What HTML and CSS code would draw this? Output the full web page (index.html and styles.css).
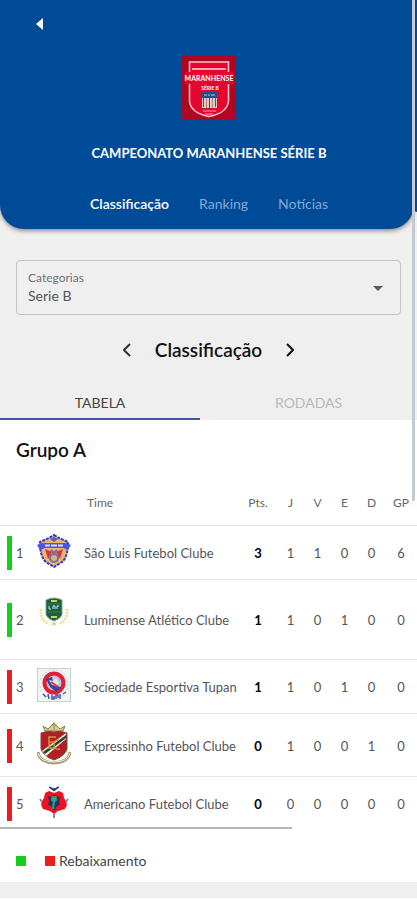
FILE: index.html
```
<!DOCTYPE html>
<html lang="pt-BR">
  <head>
    <meta charset="UTF-8" />
    <meta name="viewport" content="width=device-width, initial-scale=1.0" />
    <title>Campeonato Maranhense Série B</title>
    <link rel="stylesheet" href="styles.css">
  </head>
  <body>
    <div class="scroll-y"></div>

    <div class="hero">
      <header class="header">
        <button class="back" aria-label="Voltar">
          <svg width="8" height="12" viewBox="0 0 8 12"><path d="M7 0v12L0 6z" fill="#fff" /></svg>
        </button>
        <svg class="logo" width="54" height="63" viewBox="0 0 54 63">
          <rect width="54" height="63" fill="#b0061f" />
          <path d="M7.500 6h39v39q-1 12-19.500 15.500Q8.500 57 7.500 45z" fill="#e4062f" stroke="#f8c9cf" stroke-width="1.500" />
          <rect x="10" y="12" width="34" height="2" fill="#f5a5b0" />
          <rect x="3" y="16" width="48" height="12" fill="#e4062f" />
          <text x="27" y="25" class="logo-name">MARANHENSE</text>
          <text x="28" y="34" class="logo-serie">SÉRIE B</text>
          <rect x="20" y="36" width="15" height="16" fill="#d9cfcb" />
          <path d="M20 36h15v6H20z" fill="#284a8c" />
          <path d="M22 39h3m1 0h2m1 0h4" stroke="#b9c8e5" />
          <path d="M21.500 42v9m12 0v-9" stroke="#555b62" />
          <path d="M24.500 42v10m6-10v10" stroke="#c77a72" />
          <path d="M27.500 42v10" stroke="#3c4963" />
          <path d="M21 55h13M23 58h8" stroke="#f5a5b0" />
        </svg>
        <h1>CAMPEONATO MARANHENSE SÉRIE B</h1>
        <nav class="nav">
          <a href="#classificacao" class="active">Classificação</a>
          <a href="#ranking">Ranking</a>
          <a href="#noticias">Notícias</a>
        </nav>
      </header>
    </div>

    <div class="category">
      <label for="categoria">Categorias</label>
      <select id="categoria">
        <option>Serie B</option>
      </select>
      <svg class="arrow" width="10" height="5" viewBox="0 0 10 5"><path d="M0 0h10L5 5z" fill="#5c5c5c" /></svg>
    </div>

    <div class="phase">
      <button aria-label="Anterior">
        <svg width="8" height="14" viewBox="0 0 8 14"><path d="M7 1L1 7l6 6" fill="none" stroke="#333" stroke-width="2" /></svg>
      </button>
      <h2>Classificação</h2>
      <button aria-label="Próxima">
        <svg width="8" height="14" viewBox="0 0 8 14"><path d="M1 1l6 6-6 6" fill="none" stroke="#111" stroke-width="2" /></svg>
      </button>
    </div>

    <div class="tabs">
      <button class="tab selected">TABELA</button>
      <button class="tab">RODADAS</button>
    </div>

    <main class="content" id="classificacao">
      <h3>Grupo A</h3>
      <table>
        <colgroup>
          <col class="col-pos">
          <col class="col-crest">
          <col>
          <col class="col-pts">
          <col class="col-num">
          <col class="col-num">
          <col class="col-num">
          <col class="col-num">
          <col class="col-gp">
        </colgroup>
        <thead>
          <tr>
            <th></th>
            <th></th>
            <th class="team">Time</th>
            <th>Pts.</th>
            <th>J</th>
            <th>V</th>
            <th>E</th>
            <th>D</th>
            <th>GP</th>
          </tr>
        </thead>
        <tbody>
          <tr>
            <td><span class="pos up">1</span></td>
            <td>
              <svg class="crest" width="34" height="34" viewBox="0 0 34 34">
                <path d="M17 1l5 3 9 4q0 15-6 20l-8 5-8-5Q3 23 3 8l9-4z" fill="#efb46a" stroke="#3436c9" stroke-width="2" stroke-dasharray="3 1" />
                <path d="M8 15l7 3-4 7zM26 15l-7 3 4 7z" fill="#d2393b" />
                <path d="M0 11l5-2h24l5 2-3 5-5-2H8l-5 2z" fill="#4b55e0" />
                <path d="M8 11.500h5m1 0h6m1 0h5" stroke="#d8dcff" stroke-width="2" />
                <path d="M13 5l4-2 4 2-4 3z" fill="#5b62a5" />
                <circle cx="17" cy="24" r="4" fill="#e2b36c" stroke="#6672b4" stroke-width="2" />
                <path d="M14 16l3 3 3-3" fill="none" stroke="#7a5fb5" stroke-width="2" />
              </svg>
            </td>
            <td class="team">São Luis Futebol Clube</td>
            <td class="pts">3</td>
            <td>1</td>
            <td>1</td>
            <td>0</td>
            <td>0</td>
            <td>6</td>
          </tr>
          <tr class="tall">
            <td><span class="pos up">2</span></td>
            <td>
              <svg class="crest" width="34" height="34" viewBox="0 0 34 34">
                <path d="M4 13q-1 11 8 15M30 13q1 11-8 15" fill="none" stroke="#e9e29a" stroke-width="3" stroke-dasharray="2 1" />
                <path d="M9 4q8-4 16 0v15q-2 4-8 6-6-2-8-6z" fill="#195f42" stroke="#83a595" />
                <path d="M14 5h6M14 21h6" stroke="#cad447" stroke-width="2" />
                <path d="M11 8h12M11 16h12" stroke="#3f8064" />
                <path d="M12 10v3h2m2 0v-3h2v3m2 0v-3h2" fill="none" stroke="#d9e6df" />
                <path d="M15 29l2-2 2 2" fill="none" stroke="#ddd680" stroke-width="2" />
              </svg>
            </td>
            <td class="team">Luminense Atlético Clube</td>
            <td class="pts">1</td>
            <td>1</td>
            <td>0</td>
            <td>1</td>
            <td>0</td>
            <td>0</td>
          </tr>
          <tr>
            <td><span class="pos down">3</span></td>
            <td>
              <svg class="crest" width="34" height="34" viewBox="0 0 34 34">
                <rect x="0.500" y="0.500" width="33" height="33" fill="#eff5f0" stroke="#c4d6c6" />
                <circle cx="17" cy="16" r="14" fill="#f7f8fb" stroke="#c2c8da" stroke-dasharray="2 2" />
                <circle cx="17" cy="15" r="9.500" fill="#bfc6df" stroke="#e21e31" stroke-width="4" />
                <path d="M9 11l6-2 1 5 8 6-5 4-6-5z" fill="#3f439d" />
                <path d="M12 12l4 1 3-3 3 5-3 3-4-1z" fill="#e8e4ee" />
                <path d="M14 14l7 5" stroke="#dd3346" stroke-width="2" />
                <path d="M6 26l3 3m2-3l1 5m3-4v4h2v-3m2 3v-4h2v3m2 1v-5m3 0l3-2" fill="none" stroke="#4a50aa" stroke-width="1.500" />
              </svg>
            </td>
            <td class="team">Sociedade Esportiva Tupan</td>
            <td class="pts">1</td>
            <td>1</td>
            <td>0</td>
            <td>1</td>
            <td>0</td>
            <td>0</td>
          </tr>
          <tr class="medium">
            <td><span class="pos down">4</span></td>
            <td>
              <svg class="crest" width="34" height="43" viewBox="0 0 34 43">
                <path d="M8 9L6 4l5 3 3-3 3-3 3 3 3 3 5-3-2 5z" fill="#d8c98d" stroke="#8d8044" />
                <path d="M17 0v8M14 3h6" stroke="#a39350" />
                <path d="M1 30q1 10 16 11 15-1 16-11" fill="none" stroke="#a49c72" stroke-width="3" />
                <path d="M1 31q2 9 16 9 14 0 16-9" fill="none" stroke="#f3efd9" />
                <path d="M4 11q7-3 13-1 6-2 13 1v16q-2 7-13 11Q6 34 4 27z" fill="#b51d25" stroke="#67533a" />
                <path d="M29 11v6L9 34l-4-5z" fill="#f5efe5" />
                <path d="M29 13v3L8 32l-2-2z" fill="#234630" />
                <path d="M19 15h-7v11h6M12 20h6M22 18q-5 0-5 5t6 4" fill="none" stroke="#c9953f" stroke-width="1.500" />
              </svg>
            </td>
            <td class="team">Expressinho Futebol Clube</td>
            <td class="pts">0</td>
            <td>1</td>
            <td>0</td>
            <td>0</td>
            <td>1</td>
            <td>0</td>
          </tr>
          <tr>
            <td><span class="pos down">5</span></td>
            <td>
              <svg class="crest" width="34" height="34" viewBox="0 0 34 34">
                <path d="M12 2l5 2 5-2-5 4z" fill="#27306f" stroke="#27306f" />
                <path d="M8 8l4-2 5 2 5-2 4 2 1 5q5 6 1 11l-7 2-4 3-4-3-7-2q-4-5 1-11z" fill="#f2101d" />
                <path d="M17 9l2 3 4-1-1 5 1 4-3 1-3 5-3-5-3-1 1-4-1-5 4 1z" fill="#27306f" />
                <circle cx="17" cy="14" r="3" fill="#24ad6b" />
                <path d="M17 15l-1 9" stroke="#24ad6b" stroke-width="2" />
                <path d="M3 14l2 3m26-3l-2 3M17 29v4" stroke="#8589b1" stroke-width="2" />
              </svg>
            </td>
            <td class="team">Americano Futebol Clube</td>
            <td class="pts">0</td>
            <td>0</td>
            <td>0</td>
            <td>0</td>
            <td>0</td>
            <td>0</td>
          </tr>
        </tbody>
      </table>
      <div class="scroll-x"></div>
      <div class="legend">
        <span class="square green"></span>
        <span class="square red"></span>
        <span>Rebaixamento</span>
      </div>
    </main>
    <div class="bottom"></div>
  </body>
</html>
```
FILE: styles.css
```
* {
  box-sizing: border-box;
}
body {
  margin: 0;
  position: relative;
  background: #efefef;
  color: #111;
  font-family: "Lato", sans-serif;
  font-size: 13px;
}
h1,
h2,
h3 {
  margin: 0;
}
button {
  padding: 0;
  border: none;
  background: none;
  font-family: inherit;
  cursor: pointer;
}
svg {
  display: block;
}
.hero {
  display: flex;
  overflow: hidden;
  padding-bottom: 12px;
}
.hero::after {
  content: "";
  width: 3px;
  height: 212px;
  background: #004b98;
  border-bottom-left-radius: 4px;
}
.header {
  flex: 1;
  display: flex;
  flex-direction: column;
  align-items: center;
  height: 229px;
  padding: 18px 0 0 4px;
  background: #004b98;
  border-radius: 0 0 24px 24px;
  box-shadow: 0 2px 4px rgba(0, 0, 0, 0.4);
}
.back {
  align-self: flex-start;
  margin-left: 32px;
}
.logo {
  margin-top: 26px;
}
.logo-name,
.logo-serie {
  fill: #fff;
  font-size: 7px;
  font-weight: bold;
  text-anchor: middle;
}
.logo-serie {
  font-size: 5px;
}
h1 {
  margin-top: 24px;
  color: #fff;
  font-size: 13px;
  font-weight: bold;
  line-height: 20px;
}
.nav {
  display: flex;
  gap: 30px;
  margin-top: 31px;
}
.nav a {
  color: #86a9d0;
  font-size: 14px;
  line-height: 20px;
  text-decoration: none;
}
.nav .active {
  color: #fff;
  font-weight: 600;
}
.scroll-y {
  position: absolute;
  top: 0;
  right: 2px;
  width: 3px;
  height: 501px;
  background: #c6cad0;
  z-index: 1;
}
.category {
  position: relative;
  margin: 19px 16px 0;
  height: 55px;
  padding: 9px 11px;
  border: 1px solid #c3c3c3;
  border-radius: 4px;
}
.category label {
  display: block;
  color: #707070;
  font-size: 12px;
  line-height: 16px;
}
.category select {
  display: block;
  width: 100%;
  padding: 0;
  border: none;
  background: none;
  appearance: none;
  color: #555;
  font-family: inherit;
  font-size: 14px;
  line-height: 20px;
}
.arrow {
  position: absolute;
  top: 25px;
  right: 17px;
  pointer-events: none;
}
.phase {
  display: flex;
  justify-content: center;
  align-items: center;
  gap: 24px;
  margin-top: 23px;
  height: 24px;
}
.phase h2,
h3 {
  font-size: 19px;
  font-weight: 600;
  line-height: 24px;
}
.tabs {
  display: flex;
  margin-top: 24px;
}
.tab {
  flex: 1;
  height: 34px;
  color: #b8b8b8;
  font-size: 14px;
  border-bottom: 2px solid transparent;
}
.selected {
  flex: none;
  width: 48%;
  color: #444;
  border-bottom-color: #41569f;
}
.content {
  padding: 18px 0 11px;
  background: #fff;
}
h3 {
  padding-left: 16px;
}
table {
  width: 100%;
  margin-top: 17px;
  border-collapse: collapse;
  table-layout: fixed;
}
.col-pos {
  width: 30px;
}
.col-crest {
  width: 48px;
}
.col-pts {
  width: 38px;
}
.col-num {
  width: 27px;
}
.col-gp {
  width: 32px;
}
tr {
  height: 54px;
  border-bottom: 1px solid #e6e6e6;
}
thead tr {
  height: 46px;
}
.tall {
  height: 80px;
}
.medium {
  height: 63px;
}
tbody tr:last-child {
  border-bottom: none;
}
th,
td {
  padding: 2px 0 0;
  color: #555;
  font-size: 13px;
  text-align: center;
}
th {
  color: #666;
  font-size: 12px;
  font-weight: normal;
}
td.team {
  padding-left: 6px;
  text-align: left;
  white-space: nowrap;
}
th.team {
  padding-left: 9px;
  text-align: left;
}
td.pts {
  color: #000;
  font-weight: bold;
}
.pos {
  display: block;
  margin-left: 7px;
  padding-left: 4px;
  line-height: 34px;
  border-left: 5px solid;
  text-align: left;
}
.up {
  border-color: #12cf1c;
}
.down {
  border-color: #ee1c1c;
}
.crest {
  margin: 0 auto 5px;
}
.tall .crest {
  margin-bottom: 14px;
}
/* floats over the bottom edge of the last row */
.scroll-x {
  position: relative;
  width: 70%;
  height: 2px;
  margin-top: -3px;
  background: #b5b5b5;
}
.legend {
  display: flex;
  align-items: center;
  margin: 22px 16px 0;
  font-size: 14px;
  line-height: 20px;
  color: #444;
}
.square {
  width: 10px;
  height: 10px;
}
.green {
  margin-right: 19px;
  background: #12cf1c;
}
.red {
  margin-right: 4px;
  background: #ee1c1c;
}
.bottom {
  height: 18px;
  border-bottom: 2px solid #fff;
}
```
